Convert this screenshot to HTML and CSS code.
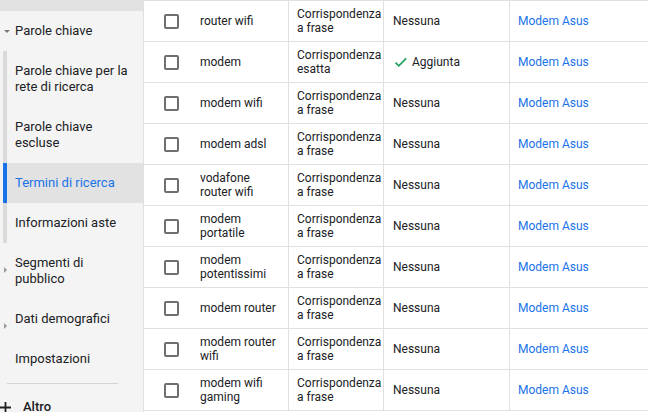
FILE: index.html
```html
<!DOCTYPE html>
<html lang="it">
<head>
    <meta charset="UTF-8">
    <meta name="viewport" content="width=device-width, initial-scale=1.0">
    <title>Termini di ricerca</title>
    <link rel="stylesheet" href="styles.css">
</head>
<body>
    <nav class="sidebar">
        <div class="sidebar-top"></div>

        <div class="nav-item nav-parent">
            <span class="caret caret-down"></span>
            Parole chiave
        </div>

        <div class="nav-group">
            <div class="nav-item">Parole chiave per la rete di ricerca</div>
            <div class="nav-item">Parole chiave escluse</div>
            <div class="nav-item active">Termini di ricerca</div>
            <div class="nav-item">Informazioni aste</div>
        </div>

        <div class="nav-item nav-parent">
            <span class="caret caret-right"></span>
            Segmenti di pubblico
        </div>
        <div class="nav-item nav-parent">
            <span class="caret caret-right"></span>
            Dati demografici
        </div>
        <div class="nav-item">Impostazioni</div>

        <hr class="nav-divider">

        <div class="nav-more">
            <svg class="plus" width="11" height="11" viewBox="0 0 11 11">
                <path d="M5.5 0v11M0 5.5h11" stroke="#202124" stroke-width="1.8"/>
            </svg>
            Altro
        </div>
    </nav>

    <main class="terms">
        <!-- Search terms table (header scrolled out of view) -->
        <div class="row">
            <div class="cell cell-check"><span class="checkbox"></span></div>
            <div class="cell cell-term">router wifi</div>
            <div class="cell cell-match">Corrispondenza a frase</div>
            <div class="cell cell-status">Nessuna</div>
            <div class="cell cell-group"><a href="#">Modem Asus</a></div>
        </div>
        <div class="row">
            <div class="cell cell-check"><span class="checkbox"></span></div>
            <div class="cell cell-term">modem</div>
            <div class="cell cell-match">Corrispondenza esatta</div>
            <div class="cell cell-status">
                <svg class="tick" width="16" height="16" viewBox="0 0 16 16">
                    <path d="M2.5 8.6l3.3 3.2 7.4-7.4" fill="none" stroke="#1e9e5a" stroke-width="1.6"/>
                </svg>
                Aggiunta
            </div>
            <div class="cell cell-group"><a href="#">Modem Asus</a></div>
        </div>
        <div class="row">
            <div class="cell cell-check"><span class="checkbox"></span></div>
            <div class="cell cell-term">modem wifi</div>
            <div class="cell cell-match">Corrispondenza a frase</div>
            <div class="cell cell-status">Nessuna</div>
            <div class="cell cell-group"><a href="#">Modem Asus</a></div>
        </div>
        <div class="row">
            <div class="cell cell-check"><span class="checkbox"></span></div>
            <div class="cell cell-term">modem adsl</div>
            <div class="cell cell-match">Corrispondenza a frase</div>
            <div class="cell cell-status">Nessuna</div>
            <div class="cell cell-group"><a href="#">Modem Asus</a></div>
        </div>
        <div class="row">
            <div class="cell cell-check"><span class="checkbox"></span></div>
            <div class="cell cell-term">vodafone router wifi</div>
            <div class="cell cell-match">Corrispondenza a frase</div>
            <div class="cell cell-status">Nessuna</div>
            <div class="cell cell-group"><a href="#">Modem Asus</a></div>
        </div>
        <div class="row">
            <div class="cell cell-check"><span class="checkbox"></span></div>
            <div class="cell cell-term">modem portatile</div>
            <div class="cell cell-match">Corrispondenza a frase</div>
            <div class="cell cell-status">Nessuna</div>
            <div class="cell cell-group"><a href="#">Modem Asus</a></div>
        </div>
        <div class="row">
            <div class="cell cell-check"><span class="checkbox"></span></div>
            <div class="cell cell-term">modem potentissimi</div>
            <div class="cell cell-match">Corrispondenza a frase</div>
            <div class="cell cell-status">Nessuna</div>
            <div class="cell cell-group"><a href="#">Modem Asus</a></div>
        </div>
        <div class="row">
            <div class="cell cell-check"><span class="checkbox"></span></div>
            <div class="cell cell-term">modem router</div>
            <div class="cell cell-match">Corrispondenza a frase</div>
            <div class="cell cell-status">Nessuna</div>
            <div class="cell cell-group"><a href="#">Modem Asus</a></div>
        </div>
        <div class="row">
            <div class="cell cell-check"><span class="checkbox"></span></div>
            <div class="cell cell-term">modem router wifi</div>
            <div class="cell cell-match">Corrispondenza a frase</div>
            <div class="cell cell-status">Nessuna</div>
            <div class="cell cell-group"><a href="#">Modem Asus</a></div>
        </div>
        <div class="row">
            <div class="cell cell-check"><span class="checkbox"></span></div>
            <div class="cell cell-term">modem wifi gaming</div>
            <div class="cell cell-match">Corrispondenza a frase</div>
            <div class="cell cell-status">Nessuna</div>
            <div class="cell cell-group"><a href="#">Modem Asus</a></div>
        </div>
    </main>
</body>
</html>
```

FILE: styles.css
```css
* {
    box-sizing: border-box;
}

body {
    font-family: Roboto, "Noto Sans", Arial, sans-serif;
    font-size: 12px;
    color: #202124;
    margin: 0;
    padding: 0;
    display: flex;
    height: 412px;
    overflow: hidden;
    background-color: #fff;
}

/* Sidebar */
.sidebar {
    width: 144px;
    flex-shrink: 0;
    background-color: #f4f4f4;
    border-right: 1px solid #e0e0e0;
    display: flex;
    flex-direction: column;
    font-size: 13px;
    color: #202124;
}

.sidebar > * {
    flex-shrink: 0;
}

.sidebar-top {
    height: 11px;
    background-color: #e2e2e2;
}

.nav-item {
    position: relative;
    padding: 12px 13.5px 12px 15px;
    line-height: 16px;
}

.nav-group {
    margin-left: 3px;
    border-left: 4px solid #dadada;
}

.nav-group .nav-item {
    padding-left: 8px;
}

.nav-item.active {
    background-color: #e2e2e2;
    color: #1a73e8;
}

.nav-item.active::before {
    content: "";
    position: absolute;
    left: -4px;
    top: 0;
    bottom: 0;
    width: 4px;
    background-color: #1a73e8;
}

.caret {
    position: absolute;
    width: 0;
    height: 0;
}

.caret-down {
    left: 4px;
    top: 19px;
    border-left: 3px solid transparent;
    border-right: 3px solid transparent;
    border-top: 3px solid #7a7a7a;
}

.caret-right {
    left: 4px;
    top: 24px;
    border-top: 3px solid transparent;
    border-bottom: 3px solid transparent;
    border-left: 3px solid #9a9a9a;
}

.nav-parent:nth-last-of-type(1) .caret-right {
    top: 17px;
}

.nav-divider {
    border: none;
    border-top: 1px solid #d4d4d4;
    margin: 4px 25px 0 7px;
}

.nav-more {
    display: flex;
    align-items: center;
    gap: 12px;
    padding: 16px 0 0 0;
    font-weight: 500;
    line-height: 14px;
}

/* Table */
.terms {
    flex: 1;
    border-top: 1px solid #e0e0e0;
}

.row {
    display: grid;
    grid-template-columns: 46px 99px 95px 126px 1fr;
    height: 41px;
    border-bottom: 1px solid #e0e0e0;
}

.cell {
    display: flex;
    align-items: center;
    line-height: 14px;
    border-right: 1px solid #e0e0e0;
}

.cell-check {
    border-right: none;
    padding-left: 20px;
}

.cell-term {
    padding: 0 8px 0 10px;
}

.cell-match {
    padding: 0 6px 0 8px;
}

.cell-status {
    padding: 0 8px 0 9px;
    gap: 3px;
}

.cell-group {
    border-right: none;
    padding: 0 8px;
}

.cell-group a {
    color: #1a73e8;
    text-decoration: none;
}

.checkbox {
    width: 15px;
    height: 15px;
    border: 2px solid #6f6f6f;
    border-radius: 2px;
    margin-top: 1px;
}
```
